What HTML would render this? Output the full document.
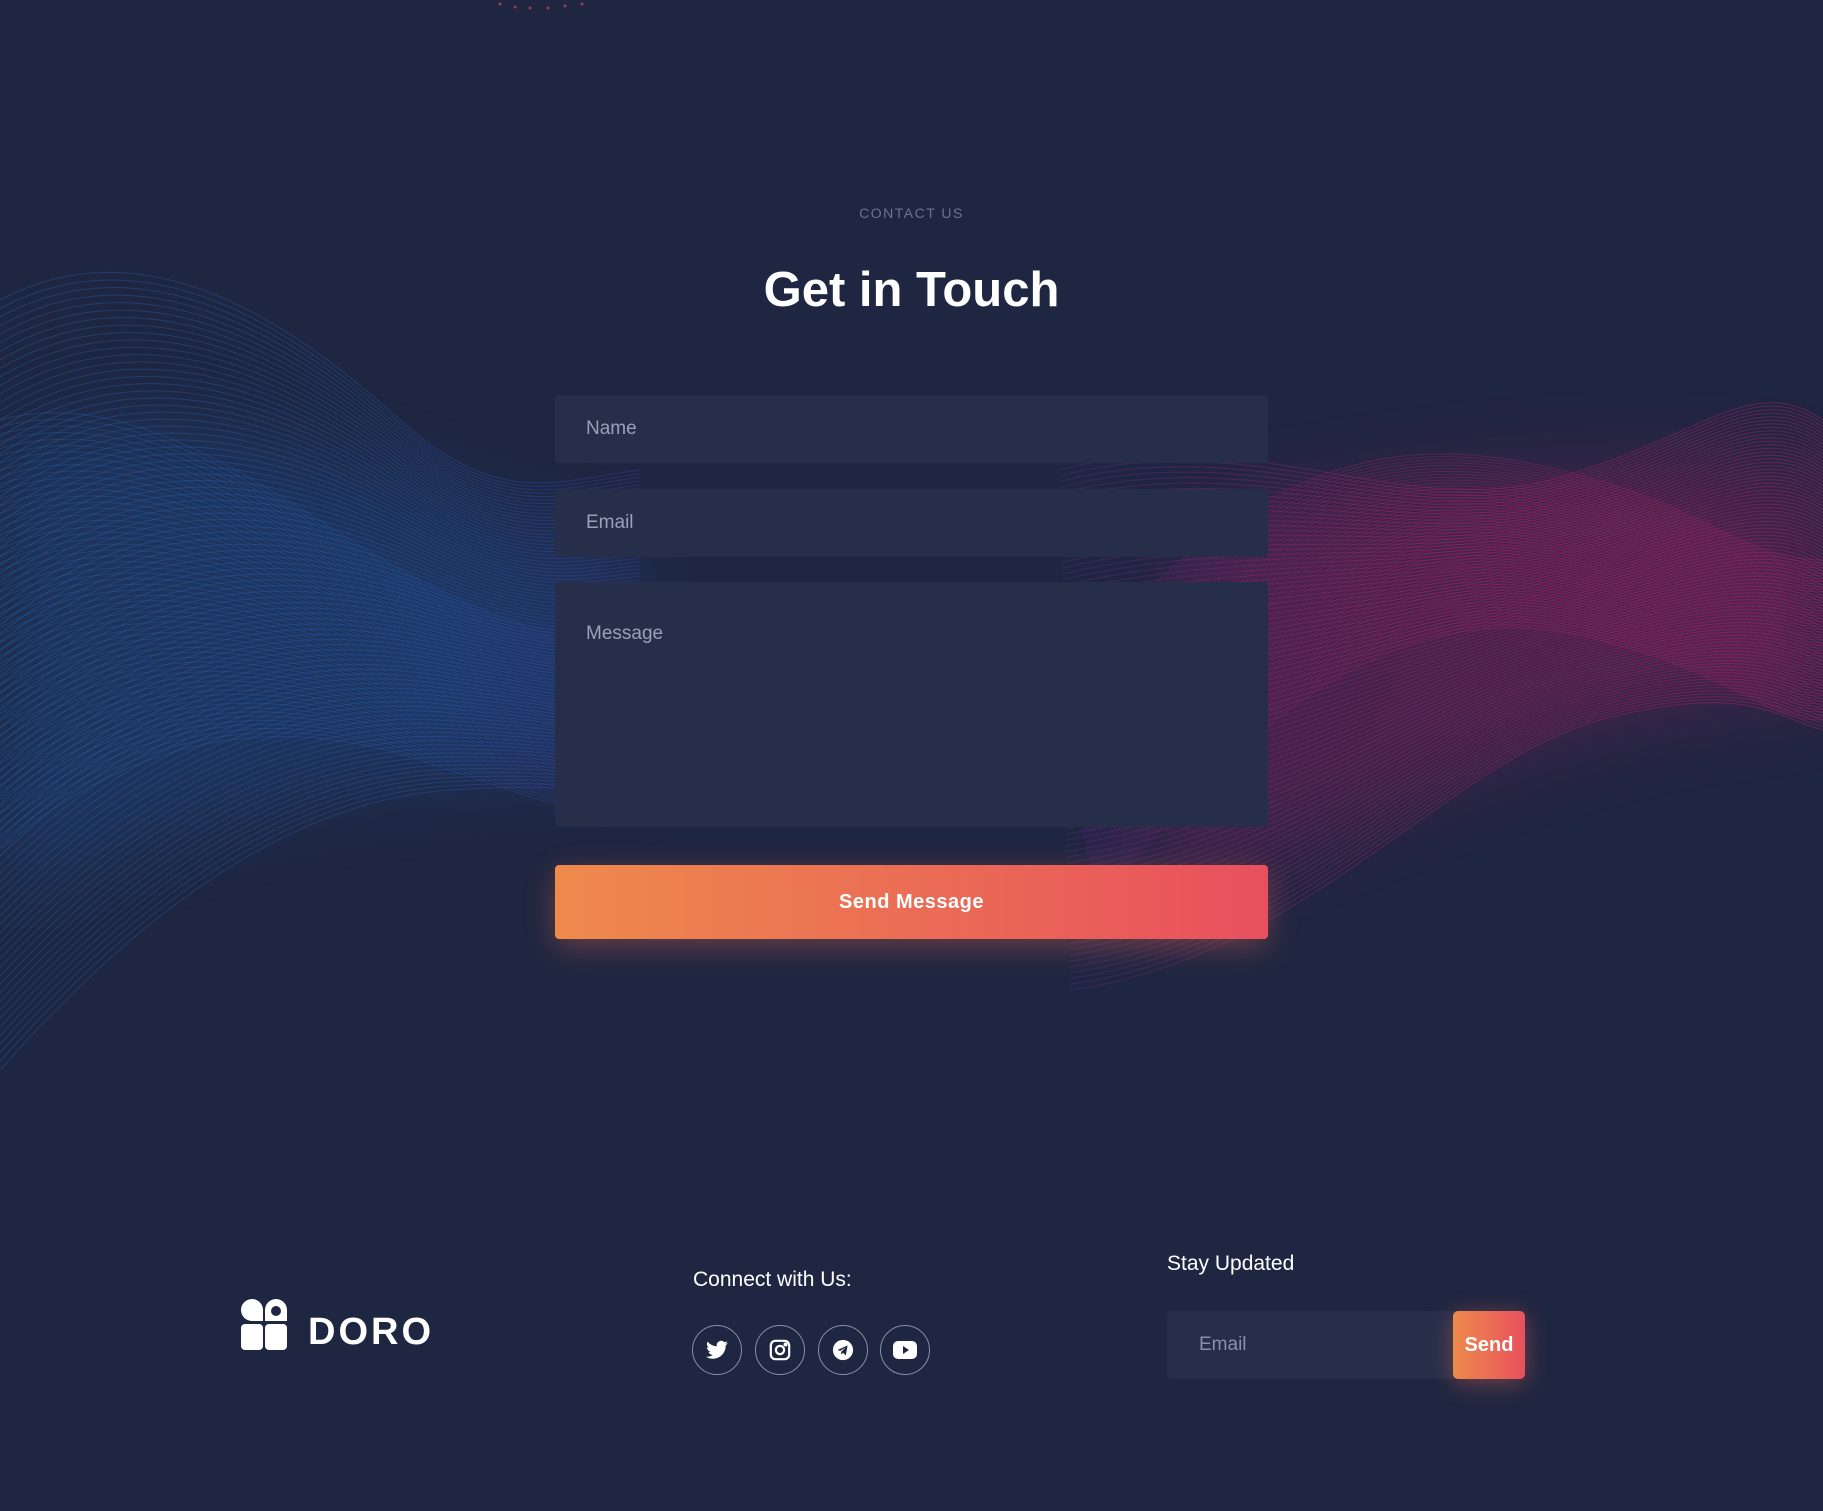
<!DOCTYPE html>
<html><head><meta charset="utf-8"><style>
*{margin:0;padding:0;box-sizing:border-box}
body{width:1823px;height:1511px;background:#1f2641;font-family:"Liberation Sans",sans-serif;position:relative;overflow:hidden}
.abs{position:absolute}
.sub{top:205px;left:0;width:1823px;text-align:center;color:#6b7390;font-size:14px;letter-spacing:1.5px}
h1{position:absolute;top:262px;left:0;width:1823px;text-align:center;color:#fff;font-size:49px;font-weight:bold}
.inp{position:absolute;left:555px;width:713px;background:#272e4a;border-radius:4px;color:#9aa0b8;font-size:19px;padding-left:31px}
.btn{position:absolute;left:555px;top:865px;width:713px;height:74px;border-radius:4px;background:linear-gradient(90deg,#ee8a4c,#e8505e);color:#fff;font-weight:bold;font-size:20px;text-align:center;line-height:74px;box-shadow:0 8px 30px rgba(238,110,80,.35);letter-spacing:.5px}
.ic{position:absolute;top:1325px;width:50px;height:50px;border:1.5px solid #8a90a8;border-radius:50%;display:flex;align-items:center;justify-content:center}
</style></head><body>
<svg id="w" class="abs" style="left:0;top:0" width="1823" height="1511">
<defs>
<linearGradient id="b" gradientUnits="userSpaceOnUse" x1="0" y1="0" x2="640" y2="0"><stop offset="0" stop-color="#1a6fc0"/><stop offset=".7" stop-color="#2560c0"/><stop offset="1" stop-color="#4a3fb0"/></linearGradient>
<linearGradient id="p" gradientUnits="userSpaceOnUse" x1="1046" y1="0" x2="1823" y2="0"><stop offset="0" stop-color="#6a2a9a"/><stop offset=".4" stop-color="#c0206e"/><stop offset="1" stop-color="#d82070"/></linearGradient>
<filter id="bl" filterUnits="userSpaceOnUse" x="-200" y="0" width="2300" height="1300"><feGaussianBlur stdDeviation="40"/></filter>
</defs>
<g filter="url(#bl)" opacity=".25">
<path d="M0 450 C200 380 400 500 640 560 L640 780 C400 760 200 800 0 900z" fill="#1a5fb0"/>
<path d="M1200 520 C1400 480 1600 450 1823 480 L1823 700 C1600 700 1400 800 1150 900z" fill="#b01e6a"/>
</g>
<g id="bg" fill="none" stroke="url(#b)" stroke-width="1"></g>
<g id="pg" fill="none" stroke="url(#p)" stroke-width="1"></g>
<g fill="#e05060" opacity=".6"><circle cx="500" cy="4" r="1.5"/><circle cx="515" cy="7" r="1.5"/><circle cx="530" cy="8" r="1.5"/><circle cx="548" cy="8" r="1.5"/><circle cx="565" cy="6" r="1.5"/><circle cx="582" cy="4" r="1.5"/></g>
</svg>
<script>
function fam(g,A,B,n,op){var s='';for(var i=0;i<=n;i++){var t=i/n,p=A.map(function(v,k){return (v+(B[k]-v)*t).toFixed(1)});
s+='<path opacity="'+op+'" d="M'+p[0]+' '+p[1]+' C'+p[2]+' '+p[3]+' '+p[4]+' '+p[5]+' '+p[6]+' '+p[7]+' S'+p[8]+' '+p[9]+' '+p[10]+' '+p[11]+'"/>';}
document.getElementById(g).innerHTML+=s;}
fam('bg',[0,300,150,220,300,330,400,420,560,480,640,470],[0,1070,150,900,300,800,450,790,600,800,640,800],90,.35);
fam('bg',[0,420,150,380,300,520,420,580,560,640,640,610],[0,850,150,720,300,720,420,760,560,810,640,820],60,.3);
fam('pg',[1060,470,1250,420,1400,520,1550,480,1750,370,1823,420],[1070,990,1300,960,1450,760,1600,720,1780,720,1823,730],90,.35);
fam('pg',[1046,700,1250,450,1400,430,1560,470,1740,560,1823,560],[1100,900,1300,650,1450,600,1600,640,1760,720,1823,720],60,.3);
</script>
<div class="abs sub">CONTACT US</div>
<h1>Get in Touch</h1>
<div class="inp" style="top:395px;height:68px;line-height:68px">Name</div>
<div class="inp" style="top:489px;height:68px;line-height:68px">Email</div>
<div class="inp" style="top:582px;height:245px;padding-top:41px">Message</div>
<div class="btn">Send Message</div>

<svg class="abs" style="left:241px;top:1299px" width="200" height="52">
<g fill="#fff"><path d="M11 0a11 11 0 0 1 11 11v11H11A11 11 0 0 1 11 0z"/><path d="M35 0a11 11 0 0 1 11 11v11H24V11A11 11 0 0 1 35 0z"/><rect x="0" y="25" width="22" height="26" rx="4"/><rect x="24" y="25" width="22" height="26" rx="4"/></g>
<circle cx="35" cy="12" r="5" fill="#1f2641"/>
<text x="67" y="45" fill="#fff" font-size="38" font-weight="bold" font-family="Liberation Sans" letter-spacing="3">DORO</text>
</svg>
<div class="abs" style="left:693px;top:1268px;color:#fff;font-size:21px">Connect with Us:</div>
<div class="ic" style="left:692px"><svg width="22" height="20" viewBox="0 0 24 20"><path fill="#fff" d="M24 2.4a10 10 0 0 1-2.8.8A5 5 0 0 0 23.3.4a10 10 0 0 1-3.1 1.2A4.9 4.9 0 0 0 11.8 6 14 14 0 0 1 1.7.9a4.9 4.9 0 0 0 1.5 6.6A4.9 4.9 0 0 1 1 6.9a4.9 4.9 0 0 0 3.9 4.9 5 5 0 0 1-2.2.1 4.9 4.9 0 0 0 4.6 3.4A9.9 9.9 0 0 1 0 17.3 14 14 0 0 0 7.5 19.5c9 0 14-7.5 14-14v-.6A10 10 0 0 0 24 2.4z"/></svg></div>
<div class="ic" style="left:755px"><svg width="22" height="22" viewBox="0 0 24 24" fill="none" stroke="#fff" stroke-width="2.4"><rect x="2" y="2" width="20" height="20" rx="5"/><circle cx="12" cy="12" r="4.5"/><circle cx="18" cy="6" r="1" fill="#fff"/></svg></div>
<div class="ic" style="left:818px"><svg width="22" height="22" viewBox="0 0 24 24"><circle cx="12" cy="12" r="11" fill="#fff"/><path d="M6 12l11-5-2 11-3-3-2 2v-3l5-5-6 4z" fill="#1f2641"/></svg></div>
<div class="ic" style="left:880px"><svg width="24" height="18" viewBox="0 0 24 18"><rect width="24" height="18" rx="5" fill="#fff"/><path d="M10 5l6 4-6 4z" fill="#1f2641"/></svg></div>

<div class="abs" style="left:1167px;top:1252px;color:#fff;font-size:21px">Stay Updated</div>
<div class="abs" style="left:1167px;top:1311px;width:290px;height:68px;background:#272e4a;border-radius:4px;color:#8a90a8;font-size:19px;line-height:68px;padding-left:32px">Email</div>
<div class="abs" style="left:1453px;top:1311px;width:72px;height:68px;border-radius:5px;background:linear-gradient(90deg,#ee8a4c,#e8505e);color:#fff;font-weight:bold;font-size:20px;line-height:68px;text-align:center;box-shadow:0 4px 24px rgba(238,110,80,.4)">Send</div>
</body></html>
